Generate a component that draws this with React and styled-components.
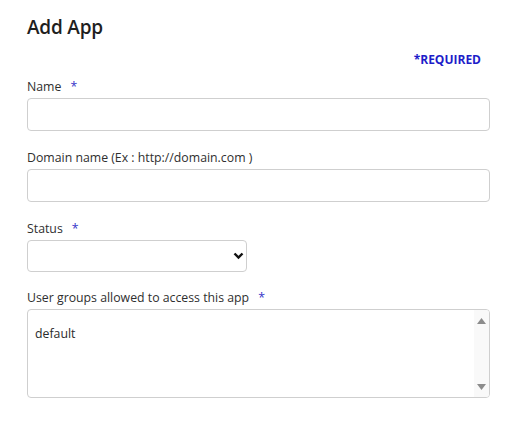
import React from "react";
import styled, { createGlobalStyle } from "styled-components";

const Global = createGlobalStyle`
  html, body { margin: 0; padding: 0; background: #fff; }
  body { font-family: "Open Sans", "Liberation Sans", sans-serif; color: #2b2b2b; }
  * { box-sizing: border-box; }
`;

const Page = styled.div`
  width: 517px;
  padding: 14px 27px 24px 27px;
`;

const Title = styled.h1`
  margin: 0;
  font-size: 19px;
  line-height: 26px;
  font-weight: 600;
  color: #1f1f1f;
  letter-spacing: -0.2px;
`;

const RequiredRow = styled.div`
  display: flex;
  justify-content: flex-end;
  padding-right: 9px;
  margin-top: 12px;
`;

const Required = styled.span`
  font-size: 12px;
  font-weight: 700;
  color: #1d1dc9;
  line-height: 16px;
`;

const Field = styled.div`
  display: flex;
  flex-direction: column;
  gap: 3px;
  margin-top: ${(p) => p.$top}px;
`;

const Label = styled.label`
  font-size: 12.3px;
  line-height: 16px;
  color: #2f2f2f;
  display: flex;
  gap: 9px;
`;

const Star = styled.span`
  color: #3434c8;
`;

const Input = styled.input`
  width: ${(p) => p.$w || 463}px;
  height: 33px;
  border: 1px solid #cfcfcf;
  border-radius: 4px;
  padding: 0 8px;
  font: inherit;
  outline: none;
`;

const SelectWrap = styled.div`
  position: relative;
  width: 220px;
  height: 32px;
`;

const Select = styled.select`
  appearance: none;
  -webkit-appearance: none;
  width: 100%;
  height: 100%;
  border: 1px solid #cfcfcf;
  border-radius: 4px;
  background: #fff;
  padding: 0 8px;
  font: inherit;
  outline: none;
`;

const Chevron = styled.svg`
  position: absolute;
  right: 3px;
  top: 12px;
  pointer-events: none;
`;

const ListBox = styled.div`
  width: 463px;
  height: 89px;
  border: 1px solid #cfcfcf;
  border-radius: 4px;
  display: flex;
  overflow: hidden;
`;

const Options = styled.div`
  flex: 1;
  padding: 16px 7px;
  font-size: 12.3px;
  line-height: 16px;
  color: #2b2b2b;
`;

const Scrollbar = styled.div`
  width: 15px;
  background: #f9f9f9;
  display: flex;
  flex-direction: column;
  justify-content: space-between;
  align-items: center;
  padding: 8px 0 7px;
`;

const Arrow = ({ down }) => (
  <svg width="9" height="6" viewBox="0 0 9 6">
    <polygon points={down ? "0,0 9,0 4.5,6" : "4.5,0 9,6 0,6"} fill="#8c8c8c" />
  </svg>
);

export default function App() {
  return (
    <>
      <Global />
      <Page>
        <Title>Add App</Title>
        <RequiredRow>
          <Required>*REQUIRED</Required>
        </RequiredRow>
        <Field $top={11}>
          <Label>
            Name <Star>*</Star>
          </Label>
          <Input type="text" />
        </Field>
        <Field $top={19}>
          <Label>Domain name (Ex : http://domain.com )</Label>
          <Input type="text" />
        </Field>
        <Field $top={19}>
          <Label>
            Status <Star>*</Star>
          </Label>
          <SelectWrap>
            <Select defaultValue="">
              <option value=""></option>
              <option value="active">Active</option>
              <option value="inactive">Inactive</option>
            </Select>
            <Chevron width="11" height="8" viewBox="0 0 11 8">
              <polyline points="1.5,1.5 5.5,5.5 9.5,1.5" fill="none" stroke="#111" strokeWidth="2.4" />
            </Chevron>
          </SelectWrap>
        </Field>
        <Field $top={18}>
          <Label>
            User groups allowed to access this app <Star>*</Star>
          </Label>
          <ListBox>
            <Options>default</Options>
            <Scrollbar>
              <Arrow />
              <Arrow down />
            </Scrollbar>
          </ListBox>
        </Field>
      </Page>
    </>
  );
}
